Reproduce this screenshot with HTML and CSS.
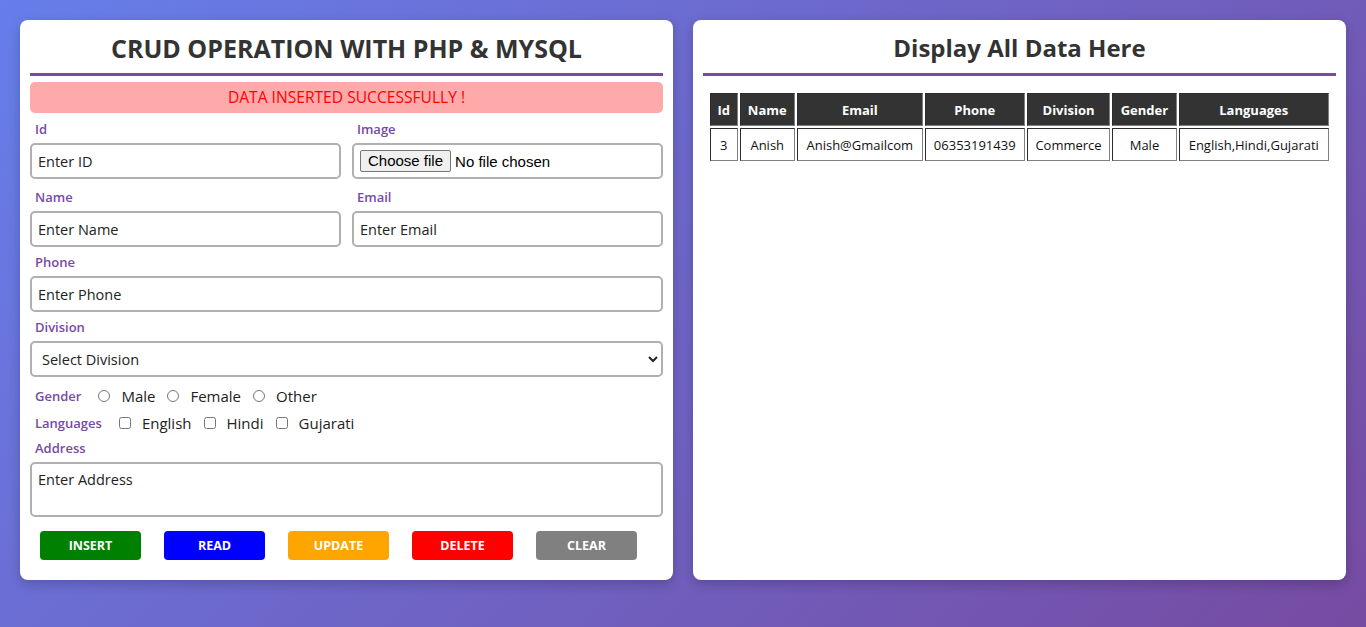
FILE: index.html
```html
<!DOCTYPE html>
<html lang="en">
<head>
<meta charset="utf-8">
<title>CRUD Operation</title>
<link rel="stylesheet" href="styles.css">
</head>
<body>
<div class="page">
  <div class="card form-card">
    <h2 class="title big">CRUD OPERATION WITH PHP &amp; MYSQL</h2>
    <div class="alert">DATA INSERTED SUCCESSFULLY !</div>
    <form class="form">
      <div class="row two first">
        <div class="field">
          <label class="lbl">Id</label>
          <input class="ctl" type="text" placeholder="Enter ID">
        </div>
        <div class="field">
          <label class="lbl">Image</label>
          <label class="ctl file">
            <input class="file-native" type="file">
            <span class="file-btn">Choose file</span>
            <span class="file-txt">No file chosen</span>
          </label>
        </div>
      </div>
      <div class="row two second">
        <div class="field">
          <label class="lbl">Name</label>
          <input class="ctl" type="text" placeholder="Enter Name">
        </div>
        <div class="field">
          <label class="lbl">Email</label>
          <input class="ctl" type="text" placeholder="Enter Email">
        </div>
      </div>
      <div class="row">
        <div class="field">
          <label class="lbl">Phone</label>
          <input class="ctl" type="text" placeholder="Enter Phone">
        </div>
      </div>
      <div class="row">
        <div class="field">
          <label class="lbl">Division</label>
          <select class="ctl sel">
            <option>Select Division</option>
          </select>
        </div>
      </div>
      <div class="choice gender">
        <span class="lbl">Gender</span>
        <label class="opt"><input type="radio" name="g"> Male</label>
        <label class="opt"><input type="radio" name="g"> Female</label>
        <label class="opt"><input type="radio" name="g"> Other</label>
      </div>
      <div class="choice langs">
        <span class="lbl">Languages</span>
        <label class="opt"><input type="checkbox"> English</label>
        <label class="opt"><input type="checkbox"> Hindi</label>
        <label class="opt"><input type="checkbox"> Gujarati</label>
      </div>
      <div class="row">
        <div class="field">
          <label class="lbl">Address</label>
          <textarea class="ctl area" placeholder="Enter Address"></textarea>
        </div>
      </div>
      <div class="buttons">
        <button type="button" class="btn insert">INSERT</button>
        <button type="button" class="btn read">READ</button>
        <button type="button" class="btn update">UPDATE</button>
        <button type="button" class="btn delete">DELETE</button>
        <button type="button" class="btn clear">CLEAR</button>
      </div>
    </form>
  </div>
  <div class="card data-card">
    <h2 class="title">Display All Data Here</h2>
    <table class="data">
      <thead>
        <tr>
          <th>Id</th><th>Name</th><th>Email</th><th>Phone</th><th>Division</th><th>Gender</th><th>Languages</th>
        </tr>
      </thead>
      <tbody>
        <tr>
          <td>3</td><td>Anish</td><td>Anish@Gmailcom</td><td>06353191439</td><td>Commerce</td><td>Male</td><td>English,Hindi,Gujarati</td>
        </tr>
      </tbody>
    </table>
  </div>
</div>
</body>
</html>
```
FILE: styles.css
```css
* { box-sizing: border-box; }
html, body { height: 100%; }
body {
  margin: 0;
  font-family: "Open Sans", "Noto Sans", sans-serif;
  color: #333;
  background: linear-gradient(135deg, #667eea 0%, #764ba2 100%);
}
.page {
  display: flex;
  gap: 20px;
  padding: 20px;
  align-items: flex-start;
}
.card {
  flex: 1;
  background: #fff;
  border-radius: 8px;
  box-shadow: 0 4px 12px rgba(0,0,0,0.2);
  padding: 10px 10px 20px;
  height: 560px;
}
.title {
  margin: 0;
  padding: 2px 0 9px;
  line-height: 32px;
  font-size: 24px;
  font-weight: 700;
  text-align: center;
  color: #333;
  border-bottom: 3px solid #764ba2;
}
.title.big { font-size: 25px; }
.alert {
  margin-top: 6px;
  height: 31px;
  line-height: 31px;
  background: #ffaaaa;
  color: #ff0000;
  text-align: center;
  font-size: 15.6px;
  border-radius: 5px;
}
.form { display: flex; flex-direction: column; }
.row { margin-top: 7px; }
.row.first { margin-top: 8px; }
.row.second { margin-top: 10px; }
.row.two { display: grid; grid-template-columns: 1fr 1fr; gap: 11px; }
.field { display: flex; flex-direction: column; }
.lbl {
  display: block;
  color: #764ba2;
  font-size: 13px;
  font-weight: 600;
  line-height: 16px;
  padding-left: 5px;
  margin-bottom: 6px;
}
.ctl {
  height: 36px;
  border: 2px solid #b0b0b0;
  border-radius: 5px;
  padding: 0 6px;
  font-family: "Open Sans", "Noto Sans", sans-serif;
  font-size: 14.5px;
  color: #333;
  background: #fff;
}
.ctl::placeholder { color: #222; opacity: 1; }
.file {
  display: flex;
  align-items: center;
  font-family: "Liberation Sans", Arial, sans-serif;
  font-size: 15px;
  padding: 0 6px;
  color: #000;
}
.file-native { display: none; }
.file-btn {
  height: 22px;
  line-height: 20px;
  padding: 0 7px;
  background: #efefef;
  border: 1px solid #767676;
  border-radius: 2px;
  color: #000;
}
.file-txt { margin-left: 4px; }
.sel { padding: 0 6px; color: #222; }
.choice {
  display: flex;
  align-items: center;
  height: 20px;
  font-size: 15px;
}
.choice .lbl { margin: 0; padding-right: 13px; }
.gender { margin-top: 9px; }
.langs { margin-top: 7px; }
.opt { display: flex; align-items: center; color: #222; margin-right: 8px; }
.opt input { margin: 0 11px 0 4px; width: 12px; height: 12px; }
.area { height: 55px; padding: 6px; resize: none; }
.buttons {
  display: flex;
  gap: 23px;
  padding-left: 10px;
  margin-top: 14px;
}
.btn {
  width: 101px;
  height: 29px;
  border: none;
  border-radius: 4px;
  color: #fff;
  font-family: "Open Sans", "Noto Sans", sans-serif;
  font-size: 12.5px;
  font-weight: 700;
}
.insert { background: #008000; }
.read { background: #0000ff; }
.update { background: #ffa500; }
.delete { background: #ff0000; }
.clear { background: #808080; }
.data {
  margin: 15px 5px 0;
  width: 623px;
  border-spacing: 2px;
  font-family: "Open Sans", "Noto Sans", sans-serif;
  font-size: 13px;
}
.data th, .data td {
  border: 1px inset #808080;
  height: 33px;
  padding: 0 6px;
  text-align: center;
  white-space: nowrap;
}
.data th {
  background: #333;
  color: #fff;
  font-weight: 700;
  font-size: 13px;
}
.data td { color: #111; }
```
